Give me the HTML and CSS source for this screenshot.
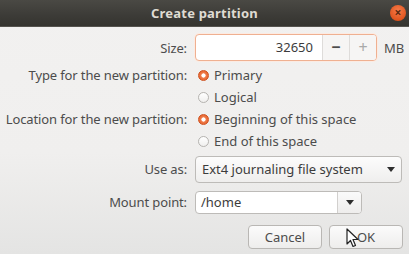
FILE: index.html
```html
<!DOCTYPE html>
<html lang="en">
<head>
  <meta charset="UTF-8" />
  <title>Create partition</title>
  <link rel="stylesheet" href="styles.css">
</head>
<body>
  <div class="window">
    <div class="titlebar">
      <span class="title">Create partition</span>
      <span class="close">×</span>
    </div>
    <div class="content">
      <div class="form">
        <label class="lbl">Size:</label>
        <div class="sizebox">
          <div class="spin">
            <span class="spin-value">32650</span>
            <span class="spin-btn minus">−</span>
            <span class="spin-btn plus">+</span>
          </div>
          <span class="unit">MB</span>
        </div>

        <label class="lbl">Type for the new partition:</label>
        <div class="radio"><span class="dot on"></span>Primary</div>
        <span></span>
        <div class="radio"><span class="dot"></span>Logical</div>

        <label class="lbl">Location for the new partition:</label>
        <div class="radio"><span class="dot on"></span>Beginning of this space</div>
        <span></span>
        <div class="radio"><span class="dot"></span>End of this space</div>

        <label class="lbl">Use as:</label>
        <div class="combo">
          <span>Ext4 journaling file system</span>
          <span class="arrow"></span>
        </div>

        <label class="lbl">Mount point:</label>
        <div class="combo-entry">
          <span class="entry-text">/home</span>
          <span class="entry-btn"><span class="arrow"></span></span>
        </div>
      </div>

      <div class="actions">
        <button class="btn">Cancel</button>
        <button class="btn">OK</button>
      </div>
    </div>

    <svg class="pointer" width="13" height="20" viewBox="0 0 13 20">
      <path d="M1 1 L1 16 L4.5 12.5 L7 18.5 L9.5 17.5 L7 11.5 L12 11.5 Z" fill="#fff" stroke="#222" stroke-width="1.2" stroke-linejoin="round"/>
    </svg>
  </div>
</body>
</html>
```

FILE: styles.css
```css
body {
  margin: 0;
  font-family: "Noto Sans", "Open Sans", sans-serif;
  font-size: 13px;
  color: #4c4c4c;
}
.window {
  position: relative;
  width: 409px;
  height: 254px;
  overflow: hidden;
  background: linear-gradient(#f2f1f0 0%, #f0efee 60%, #e4e4e3 100%);
}
.titlebar {
  height: 26px;
  border-bottom: 1px solid #55534e;
  background: linear-gradient(#4a4944, #3c3b37 60%, #35342f);
  display: flex;
  align-items: center;
  justify-content: center;
}
.title {
  color: #dfdbd2;
  font-weight: bold;
  font-size: 13px;
  letter-spacing: 0.2px;
}
.close {
  position: absolute;
  top: 5px;
  right: 3px;
  width: 16px;
  height: 16px;
  border-radius: 50%;
  background: radial-gradient(circle at 50% 35%, #f57b4a, #e0551f 70%, #c9460f);
  color: #5a2a12;
  font-size: 12px;
  line-height: 15px;
  text-align: center;
  font-weight: bold;
}
.content {
  padding: 4px 6px 0 0;
}
.form {
  display: grid;
  grid-template-columns: 187px 1fr;
  grid-template-rows: 33px repeat(4, 22px) 34px 32px;
  column-gap: 8px;
  align-items: center;
}
.lbl {
  text-align: right;
  white-space: nowrap;
  letter-spacing: -0.12px;
}
.sizebox {
  display: flex;
  align-items: center;
}
.spin {
  display: flex;
  width: 180px;
  height: 25px;
  border: 1px solid #efb091;
  border-radius: 4px;
  box-shadow: 0 0 0 1px #fcebe2;
  background: #fff;
  overflow: hidden;
}
.spin-value {
  flex: 1;
  text-align: right;
  padding-right: 9px;
  line-height: 25px;
  color: #3c3c3c;
}
.spin-btn {
  width: 26px;
  text-align: center;
  line-height: 24px;
  font-size: 16px;
  background: #f6f5f4;
  border-left: 1px solid #dedcda;
}
.minus {
  color: #4c4c4c;
  font-weight: bold;
}
.plus {
  color: #a9a9a9;
}
.unit {
  margin-left: 7px;
}
.radio {
  display: flex;
  align-items: center;
  gap: 5px;
  margin-left: 3px;
}
.dot {
  box-sizing: border-box;
  width: 11px;
  height: 11px;
  border-radius: 50%;
  border: 1px solid #b5b3b0;
  background: linear-gradient(#fff, #f0efee);
}
.dot.on {
  border-color: #cf5220;
  background: radial-gradient(circle, #fff 0 1.8px, #ef7c4b 2.4px, #e2571f 100%);
}
.combo {
  box-sizing: border-box;
  width: 207px;
  height: 27px;
  border: 1px solid #bdbbb8;
  border-radius: 4px;
  background: linear-gradient(#fcfcfc, #efeeed);
  display: flex;
  align-items: center;
  justify-content: space-between;
  padding: 0 6px 0 6px;
  color: #3c3c3c;
}
.arrow {
  width: 0;
  height: 0;
  border-left: 4px solid transparent;
  border-right: 4px solid transparent;
  border-top: 5px solid #2e2e2e;
}
.combo-entry {
  box-sizing: border-box;
  width: 167px;
  height: 23px;
  border: 1px solid #bdbbb8;
  border-radius: 4px;
  background: #fff;
  display: flex;
  overflow: hidden;
  color: #3c3c3c;
}
.entry-text {
  flex: 1;
  padding-left: 5px;
  line-height: 21px;
}
.entry-btn {
  width: 23px;
  border-left: 1px solid #d2d0ce;
  background: linear-gradient(#fafafa, #eeedec);
  display: flex;
  align-items: center;
  justify-content: center;
}
.actions {
  display: flex;
  justify-content: flex-end;
  gap: 7px;
  margin-top: 7px;
}
.btn {
  width: 74px;
  height: 24px;
  font-family: inherit;
  font-size: 13px;
  color: #4c4c4c;
  border: 1px solid #b9b7b4;
  border-radius: 4px;
  background: linear-gradient(#fbfbfb, #eeedec);
  padding: 0;
}
.pointer {
  position: absolute;
  left: 346px;
  top: 228px;
}
```
